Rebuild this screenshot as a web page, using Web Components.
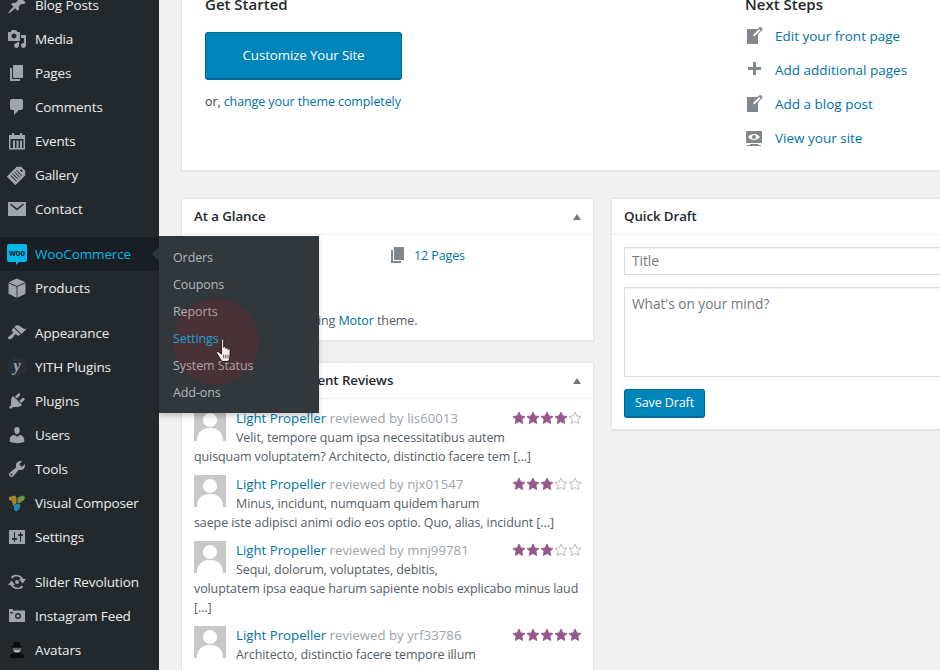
<!DOCTYPE html>
<html>
<head>
<meta charset="utf-8">
<title>Dashboard</title>
<style>
  html, body { margin: 0; height: 670px; overflow: hidden; background: #f1f1f1; }
  body { font: 12.5px/19px "Open Sans", "Noto Sans", sans-serif; letter-spacing: -.1px; color: #444; }
</style>
</head>
<body>
<wp-shell>
  <wp-sidebar slot="side">
    <wp-menu-item icon="post">Blog Posts</wp-menu-item>
    <wp-menu-item icon="media">Media</wp-menu-item>
    <wp-menu-item icon="page">Pages</wp-menu-item>
    <wp-menu-item icon="comment">Comments</wp-menu-item>
    <wp-menu-item icon="events">Events</wp-menu-item>
    <wp-menu-item icon="gallery">Gallery</wp-menu-item>
    <wp-menu-item icon="mail">Contact</wp-menu-item>
    <wp-menu-item icon="woo" sep current>WooCommerce
      <wp-flyout slot="flyout">
        <a>Orders</a><a>Coupons</a><a>Reports</a><a class="on">Settings</a><a>System Status</a><a>Add-ons</a>
      </wp-flyout>
    </wp-menu-item>
    <wp-menu-item icon="box">Products</wp-menu-item>
    <wp-menu-item icon="brush" sep>Appearance</wp-menu-item>
    <wp-menu-item icon="yith">YITH Plugins</wp-menu-item>
    <wp-menu-item icon="plug">Plugins</wp-menu-item>
    <wp-menu-item icon="user">Users</wp-menu-item>
    <wp-menu-item icon="tools">Tools</wp-menu-item>
    <wp-menu-item icon="vc">Visual Composer</wp-menu-item>
    <wp-menu-item icon="sliders">Settings</wp-menu-item>
    <wp-menu-item icon="revo" sep>Slider Revolution</wp-menu-item>
    <wp-menu-item icon="camera">Instagram Feed</wp-menu-item>
    <wp-menu-item icon="spy">Avatars</wp-menu-item>
  </wp-sidebar>

  <wp-welcome></wp-welcome>

  <wp-card slot="left" heading="At a Glance" arrow>
    <wp-glance></wp-glance>
  </wp-card>
  <wp-card slot="left" heading="WooCommerce Recent Reviews" arrow>
    <wp-reviews>
      <wp-review who="lis60013" stars="4">Velit, tempore quam ipsa necessitatibus autem<br>quisquam voluptatem? Architecto, distinctio facere tem [...]</wp-review>
      <wp-review who="njx01547" stars="3">Minus, incidunt, numquam quidem harum<br>saepe iste adipisci animi odio eos optio. Quo, alias, incidunt [...]</wp-review>
      <wp-review who="mnj99781" stars="3">Sequi, dolorum, voluptates, debitis,<br>voluptatem ipsa eaque harum sapiente nobis explicabo minus laud<br>[...]</wp-review>
      <wp-review who="yrf33786" stars="5">Architecto, distinctio facere tempore illum</wp-review>
    </wp-reviews>
  </wp-card>

  <wp-card slot="right" heading="Quick Draft">
    <wp-quick-draft></wp-quick-draft>
  </wp-card>
</wp-shell>

<script>
const ICONS = {
  post: '<path d="M10.44 3.02l1.82-1.82 6.36 6.35-1.83 1.82c-1.05-.68-2.48-.57-3.41.36l-.75.75c-.92.93-1.04 2.35-.35 3.41l-1.83 1.82-2.41-2.41-2.8 2.79c-.42.42-3.38 2.71-3.8 2.29s1.86-3.39 2.28-3.81l2.79-2.79L4.1 9.36l1.83-1.82c1.05.69 2.48.57 3.4-.36l.75-.75c.93-.92 1.05-2.35.36-3.41z"/>',
  media: '<path d="M13 11V4c0-.55-.45-1-1-1h-1.67L9 1H5L3.67 3H2c-.55 0-1 .45-1 1v7c0 .55.45 1 1 1h10c.55 0 1-.45 1-1zM7 4.5c1.38 0 2.5 1.12 2.5 2.5S8.38 9.5 7 9.5 4.5 8.38 4.5 7 5.62 4.5 7 4.5zM14 6h5v10.5c0 1.38-1.12 2.5-2.5 2.5S14 17.88 14 16.5s1.12-2.5 2.5-2.5c.17 0 .34.02.5.05V9h-3V6zm-4 8.05V13h2v3.5c0 1.38-1.12 2.5-2.5 2.5S7 17.88 7 16.5 8.12 14 9.5 14c.17 0 .34.02.5.05z"/>',
  page: '<path d="M6 15V2h10v13H6zm-1 1h8v2H3V5h2v11z"/>',
  comment: '<path d="M5 2h9c1.1 0 2 .9 2 2v7c0 1.1-.9 2-2 2h-2l-5 5v-5H5c-1.1 0-2-.9-2-2V4c0-1.1.9-2 2-2z"/>',
  events: '<path fill-rule="evenodd" d="M2 4h3V2h2v2h6V2h2v2h3v14.500H2zM3.500 8v9H6V9.500h2V17h1.500V9.500h2V17H13V9.500h2V17h1.500V8z"/>',
  gallery: '<g transform="rotate(45 10 10) translate(10 10) scale(1.100) translate(-10 -10.500)"><path fill-rule="evenodd" d="M4.500 5.500L7.500 2.500h5l3 3V18h-11zM9 4h2v1.500H9zM6.500 7.500v.8h7v-.8zM6.500 9.800v.8h7v-.8zM6.500 12.100v.8h7v-.8zM6.500 14.400v.8h7v-.8z"/></g>',
  mail: '<path fill-rule="evenodd" d="M1 3h18v14H1zM3 5.500l7 6 7-6-.9-1L10 9.500 3.900 4.500z"/>',
  box: '<path d="M10 .5l8.500 3.800L10 8 1.500 4.300zM1.500 5.200l8.100 3.500v11L1.500 15.800zM18.500 5.200l-8.100 3.500v11l8.100-3.900z"/>',
  brush: '<path d="M14.480 11.060L7.410 3.990l1.500-1.500c.5-.56 2.300-.47 3.510.32 1.210.8 1.430 1.280 2.910 2.100 1.180.64 2.450 1.260 4.450.85zm-.71.71L6.700 4.700 4.930 6.470c-.39.39-.39 1.020 0 1.410l1.060 1.060c.39.39.39 1.030 0 1.420-.6.6-1.430 1.110-2.210 1.690-.35.26-.7.53-1.010.84C1.430 13.230.4 14.970 1.440 16.020c.99.98 2.750-.1 4.060-1.360.3-.3.59-.66.84-1.010.58-.78 1.090-1.610 1.690-2.210.39-.39 1.020-.39 1.410 0l1.060 1.060c.39.39 1.020.39 1.410 0z"/>',
  plug: '<path d="M13.110 4.360L9.870 7.600 8 5.730l3.240-3.240c.35-.34 1.050-.2 1.560.32.52.51.66 1.210.31 1.550zm-8 1.770l.91-1.120 9.010 9.010-1.190.84c-.71.71-2.630 1.160-3.820 1.160H6.140L4.900 17.260c-.59.59-1.540.59-2.120 0-.59-.58-.59-1.530 0-2.120l1.240-1.240v-3.880c0-1.130.4-3.190 1.090-3.890zm7.260 3.970l3.240-3.240c.34-.35 1.040-.21 1.550.31.52.51.66 1.210.31 1.550l-3.240 3.250z"/>',
  user: '<path d="M10 9.250c-2.270 0-2.730-3.440-2.730-3.440C7 4.020 7.820 2 9.970 2c2.160 0 2.980 2.020 2.710 3.810 0 0-.41 3.440-2.680 3.440zm0 2.570L12.720 10c2.390 0 4.520 2.330 4.520 4.530v2.490s-3.650 1.130-7.240 1.130c-3.650 0-7.240-1.130-7.240-1.130v-2.490c0-2.250 1.940-4.480 4.470-4.480z"/>',
  tools: '<path d="M16.680 9.770c-1.340 1.340-3.300 1.670-4.950.99l-5.410 6.520c-.99.99-2.590.99-3.580 0s-.99-2.590 0-3.570l6.520-5.420c-.68-1.650-.35-3.610.99-4.950 1.280-1.280 3.120-1.620 4.720-1.060l-2.890 2.890 2.820 2.820 2.860-2.870c.53 1.580.18 3.390-1.080 4.650zM3.810 16.210c.4.39 1.040.39 1.430 0 .4-.4.4-1.040 0-1.430-.39-.4-1.030-.4-1.430 0-.39.39-.39 1.030 0 1.430z"/>',
  vc: '<path fill="#a8842c" d="M2 4l6-1.500 1.500 2V10L6 13 5 8 2 7z"/><path fill="#6f9a3c" d="M10.500 4.500L16 2.500l2 1.500-1 3-3 2-1.500 1.500-2-1z"/><path fill="#1f8ab5" d="M7 12.500l3-2 3.500 1-1 4.500-3 2.500-2.500-1.500z"/>',
  sliders: '<path fill-rule="evenodd" d="M2 3h16v14H2zM8 11V5.500c0-.28-.22-.5-.5-.5s-.5.22-.5.5V11H6c-.55 0-1 .45-1 1s.45 1 1 1h1v1.500c0 .28.22.5.5.5s.5-.22.5-.5V13h1c.55 0 1-.45 1-1s-.45-1-1-1zm5-2v5.500c0 .28.22.5.5.5s.5-.22.5-.5V9h1c.55 0 1-.45 1-1s-.45-1-1-1h-1V5.500c0-.28-.22-.5-.5-.5s-.5.22-.5.5V7h-1c-.55 0-1 .45-1 1s.45 1 1 1z"/>',
  revo: '<path d="M10 3a7 7 0 0 1 6.300 4H19l-3.500 4.500L12 7h2a5 5 0 0 0-8.500-.5L3.700 5A7 7 0 0 1 10 3zM10 17a7 7 0 0 1-6.300-4H1l3.500-4.500L8 13H6a5 5 0 0 0 8.500.5l1.800 1.500A7 7 0 0 1 10 17z"/><circle cx="10" cy="10" r="2"/>',
  camera: '<path fill-rule="evenodd" d="M2 3h4v1.500h12V16H2zM11 7a3 3 0 1 0 0 6 3 3 0 0 0 0-6zM3.500 6v1.500H6V6z"/><circle cx="11" cy="10" r="1.600"/>',
  spy: '<path fill="#0b0c0d" d="M7 2h6l.5 4H16v1.200H4V6h2.500zM3 15l4-2.500h6l4 2.500v3H3z"/><path fill="#b5b8ba" d="M6.500 8h7v2.500L12 12.500H8l-1.500-2z"/><path fill="#0b0c0d" d="M7 8.500h6v1H7z"/>',
  write: '<path d="M16.890 1.200l1.410 1.410c.39.39.39 1.020 0 1.410L14 8.330V18H3V3h10.670l1.800-1.800c.4-.39 1.030-.4 1.420 0zm-5.660 8.480l5.370-5.360-1.410-1.420-5.360 5.370-.71 2.120z"/>',
  plus: '<path d="M17 7v3h-5v5H9v-5H4V7h5V2h3v5h5z"/>',
  view: '<path d="M18 14V4c0-.55-.45-1-1-1H3c-.55 0-1 .45-1 1v10c0 .55.45 1 1 1h14c.55 0 1-.45 1-1zm-8-8c2.300 0 4.400 1.140 6 3-1.600 1.860-3.700 3-6 3s-4.400-1.140-6-3c1.600-1.860 3.700-3 6-3zm2 3c0-1.100-.9-2-2-2s-2 .9-2 2 .9 2 2 2 2-.9 2-2zm2 8h3v1H3v-1h3v-1h8v1z"/>'
}

class WpIcon extends HTMLElement {
  connectedCallback() {
    const name = this.getAttribute('name')
    const root = this.shadowRoot || this.attachShadow({ mode: 'open' })
    let inner = `<svg viewBox="0 0 20 20" fill="currentColor">${ICONS[name] || ''}</svg>`
    if (name === 'woo') {
      inner = `<span class="woo">woo</span>`
    } else if (name === 'yith') {
      inner = `<span class="yith">y</span>`
    }
    root.innerHTML = `
      <style>
        :host { display: block; width: 20px; height: 20px; color: inherit; position: relative; }
        svg { display: block; width: 100%; height: 100%; }
        .woo {
          display: block; width: 20px; height: 18px; background: #00b9eb; border-radius: 2px;
          color: #16242c; font: 700 8px/17px "Open Sans", sans-serif; text-align: center; letter-spacing: -.2px;
        }
        .woo::after {
          content: ""; position: absolute; left: 9px; top: 18px;
          border-top: 3px solid #00b9eb; border-right: 3px solid transparent;
        }
        .yith {
          display: block; width: 20px; height: 20px; border-radius: 50%; background: #282e35; text-align: center;
          font: italic 700 16px/17px "Liberation Serif", serif; color: #a0a5aa;
        }
      </style>
      ${inner}`
  }
}
customElements.define('wp-icon', WpIcon)

class WpShell extends HTMLElement {
  constructor() {
    super()
    this.attachShadow({ mode: 'open' })
    this.shadowRoot.innerHTML = `
      <style>
        :host { display: flex; width: 1025px; height: 670px; }
        .main { width: 866px; padding-left: 22px; box-sizing: border-box; margin-top: -40px; }
        .cols { display: grid; grid-template-columns: 413px 413px; column-gap: 17px; margin-top: 27px; align-items: start; }
        .col { display: flex; flex-direction: column; gap: 21px; }
      </style>
      <slot name="side"></slot>
      <div class="main">
        <slot></slot>
        <div class="cols">
          <div class="col"><slot name="left"></slot></div>
          <div class="col"><slot name="right"></slot></div>
        </div>
      </div>`
  }
}
customElements.define('wp-shell', WpShell)

class WpSidebar extends HTMLElement {
  constructor() {
    super()
    this.attachShadow({ mode: 'open' })
    this.shadowRoot.innerHTML = `
      <style>
        :host { display: block; flex: none; width: 159px; background: #23282d; height: 670px; position: relative; z-index: 5; }
        .list { margin-top: -12px; }
      </style>
      <div class="list"><slot></slot></div>`
  }
}
customElements.define('wp-sidebar', WpSidebar)

class WpMenuItem extends HTMLElement {
  constructor() {
    super()
    this.attachShadow({ mode: 'open' })
    const name = this.getAttribute('icon')
    this.shadowRoot.innerHTML = `
      <style>
        :host {
          display: flex; align-items: center; gap: 8px; height: 34px; padding-left: 7px;
          position: relative; color: #eee; font-size: 13.5px; letter-spacing: -.13px; line-height: 18px;
        }
        :host([sep]) { margin-top: 11px; }
        :host([current]) { background: #191e23; color: #00b9eb; }
        :host([current])::after {
          content: ""; position: absolute; right: 0; top: 10px;
          border: 7px solid transparent; border-left-width: 0; border-right-color: #32373c;
        }
        wp-icon { color: #a0a5aa; flex: none; }
      </style>
      <wp-icon name="${name}"></wp-icon>
      <span><slot></slot></span>
      <slot name="flyout"></slot>`
  }
}
customElements.define('wp-menu-item', WpMenuItem)

class WpFlyout extends HTMLElement {
  constructor() {
    super()
    this.attachShadow({ mode: 'open' })
    this.shadowRoot.innerHTML = `
      <style>
        :host {
          display: block; position: absolute; left: 159px; top: -1px; width: 160px; height: 177px; box-sizing: border-box;
          padding: 8px 0 0 14px; background: #32373c; box-shadow: 0 3px 5px rgba(0,0,0,.2); z-index: 10;
          font-size: 12.5px; letter-spacing: -.1px;
        }
        ::slotted(a) { display: block; height: 27px; line-height: 27px; color: #b4b9be; }
        ::slotted(a.on) { color: #00b9eb; }
        .halo { position: absolute; left: 14px; top: 63px; width: 86px; height: 86px; border-radius: 50%; background: rgba(200,20,30,.15); }
        svg { position: absolute; left: 56px; top: 102px; width: 18px; height: 24px; }
      </style>
      <slot></slot>
      <div class="halo"></div>
      <svg viewBox="1 0 15 23"><path fill="#fdeaea" stroke="#111" stroke-width=".9" stroke-linejoin="round" d="M6 2c0-1.300 2.200-1.300 2.200 0v7c.1-1 2-1 2.100 0v1c.1-1 2-1 2.100 0v1c.2-.9 1.900-.8 2 .2 0 3-.1 6-.4 8-.2 1.500-1 2.800-1.500 3.300H6.500C5 20 3 17 1.500 14.500c-.6-1.200 1-2.300 2-1.100L6 15.500z"/><path stroke="#111" stroke-width=".7" d="M8.200 16v3.500M10.300 16v3.500M12.400 16v3.500"/></svg>`
  }
}
customElements.define('wp-flyout', WpFlyout)

class WpCard extends HTMLElement {
  constructor() {
    super()
    this.attachShadow({ mode: 'open' })
    const arrow = this.hasAttribute('arrow') ? '<i></i>' : ''
    this.shadowRoot.innerHTML = `
      <style>
        :host { display: block; background: #fff; border: 1px solid #e5e5e5; box-shadow: 0 1px 1px rgba(0,0,0,.04); }
        header {
          display: flex; justify-content: space-between; align-items: center; height: 35px; padding: 0 12px;
          border-bottom: 1px solid #eee; font-size: 13.3px; letter-spacing: -.08px; font-weight: 600; color: #23282d;
        }
        i { border: 4.5px solid transparent; border-top-width: 0; border-bottom: 6px solid #72777c; margin-right: 0; }
      </style>
      <header><span>${this.getAttribute('heading')}</span>${arrow}</header>
      <slot></slot>`
  }
}
customElements.define('wp-card', WpCard)

class WpWelcome extends HTMLElement {
  constructor() {
    super()
    this.attachShadow({ mode: 'open' })
    const step = (icon, label) => `<li><wp-icon name="${icon}"></wp-icon><a>${label}</a></li>`
    this.shadowRoot.innerHTML = `
      <style>
        :host {
          display: flex; box-sizing: border-box; height: 211px; padding: 32px 23px 0; background: #fff;
          border: 1px solid #e5e5e5; box-shadow: 0 1px 1px rgba(0,0,0,.04);
        }
        h3 { margin: 0; font-size: 15px; line-height: 22px; font-weight: 600; letter-spacing: 0; color: #23282d; }
        a { color: #0073aa; }
        .start { width: 540px; }
        .cta {
          display: block; box-sizing: border-box; width: 197px; height: 48px; margin: 17px 0 12px; border: 1px solid #006799;
          border-bottom-width: 2px; border-radius: 3px; background: #0085ba; color: #fff; text-align: center;
          font-size: 13.3px; letter-spacing: -.1px; line-height: 44px;
        }
        ul { list-style: none; margin: 4px 0 0; padding: 0; font-size: 13.5px; letter-spacing: 0; }
        li { display: flex; align-items: center; gap: 11px; height: 34px; }
        li wp-icon { color: #82878c; margin-left: -1px; }
      </style>
      <div class="start">
        <h3>Get Started</h3>
        <a class="cta">Customize Your Site</a>
        <span>or, <a>change your theme completely</a></span>
      </div>
      <div>
        <h3>Next Steps</h3>
        <ul>
          ${step('write', 'Edit your front page')}
          ${step('plus', 'Add additional pages')}
          ${step('write', 'Add a blog post')}
          ${step('view', 'View your site')}
        </ul>
      </div>`
  }
}
customElements.define('wp-welcome', WpWelcome)

class WpGlance extends HTMLElement {
  constructor() {
    super()
    this.attachShadow({ mode: 'open' })
    this.shadowRoot.innerHTML = `
      <style>
        :host { display: block; height: 105px; padding: 10px 12px 0; box-sizing: border-box; color: #555d66; }
        .pages { display: flex; align-items: center; gap: 6px; margin-left: 194px; height: 20px; }
        .pages wp-icon { color: #82878c; width: 20px; height: 20px; }
        a { color: #0073aa; }
        p { margin: 46px 0 0; }
      </style>
      <div class="pages"><wp-icon name="page"></wp-icon><a>12 Pages</a></div>
      <p>WordPress 4.9.4 running <a>Motor</a> theme.</p>`
  }
}
customElements.define('wp-glance', WpGlance)

class WpReviews extends HTMLElement {
  constructor() {
    super()
    this.attachShadow({ mode: 'open' })
    this.shadowRoot.innerHTML = `
      <style>:host { display: block; padding: 10px 12px 40px; }</style>
      <slot></slot>`
  }
}
customElements.define('wp-reviews', WpReviews)

class WpReview extends HTMLElement {
  constructor() {
    super()
    this.attachShadow({ mode: 'open' })
    const stars = Number(this.getAttribute('stars'))
    let row = ''
    for (let i = 0; i < 5; i++) {
      const on = i < stars
      row += `<svg viewBox="0 0 20 20"><path fill="${on ? '#96588a' : '#fff'}" stroke="${on ? '#96588a' : '#b5b5b5'}" stroke-width="1.300" d="M10 1.500l2.600 5.600 6 .7-4.500 4.100 1.200 6L10 14.900l-5.300 3 1.200-6L1.400 7.800l6-.7z"/></svg>`
    }
    this.shadowRoot.innerHTML = `
      <style>
        :host { display: block; margin-bottom: 9px; color: #555d66; }
        :host::after { content: ""; display: block; clear: both; }
        .avatar { float: left; width: 32px; height: 32px; margin-right: 10px; background: #c8c8c8; overflow: hidden; }
        .avatar svg { display: block; width: 32px; height: 32px; }
        .stars { float: right; display: flex; width: 70px; margin: 2px -1px 0 0; }
        .stars svg { width: 14px; height: 14px; flex: none; }
        a { color: #0073aa; }
        b { font-weight: 400; color: #a0a5aa; }
        .head { font-size: 13.24px; letter-spacing: 0; }
      </style>
      <div class="avatar"><svg viewBox="0 0 32 32"><circle cx="16" cy="11" r="7" fill="#fff"/><path fill="#fff" d="M3 32c0-9 5-13 13-13s13 4 13 13z"/></svg></div>
      <div class="stars">${row}</div>
      <div class="head"><a>Light Propeller</a> <b>reviewed by ${this.getAttribute('who')}</b></div>
      <slot></slot>`
  }
}
customElements.define('wp-review', WpReview)

class WpQuickDraft extends HTMLElement {
  constructor() {
    super()
    this.attachShadow({ mode: 'open' })
    this.shadowRoot.innerHTML = `
      <style>
        :host { display: block; padding: 12px 12px 11px; }
        .field { border: 1px solid #ddd; box-shadow: inset 0 1px 2px rgba(0,0,0,.07); color: #72777c; padding: 0 7px; font-size: 13.6px; letter-spacing: 0; }
        .title { height: 26px; line-height: 26px; margin-bottom: 12px; }
        .body { height: 82px; padding-top: 6px; margin-bottom: 12px; }
        .save {
          display: block; box-sizing: border-box; width: 81px; height: 29px; background: #0085ba; border: 1px solid #006799;
          border-bottom-width: 2px; border-radius: 3px; color: #fff; text-align: center; line-height: 26px;
        }
      </style>
      <div class="field title">Title</div>
      <div class="field body">What's on your mind?</div>
      <a class="save">Save Draft</a>`
  }
}
customElements.define('wp-quick-draft', WpQuickDraft)
</script>
</body>
</html>
